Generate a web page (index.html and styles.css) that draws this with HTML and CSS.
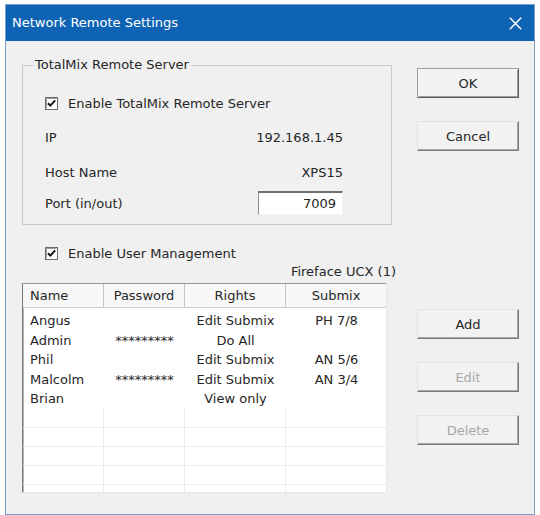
FILE: index.html
```html
<!DOCTYPE html>
<html lang="en">
<head>
<meta charset="utf-8">
<title>Network Remote Settings</title>
<link rel="stylesheet" href="styles.css">
</head>
<body>
<div class="dialog">
  <div class="titlebar">
    <span class="title">Network Remote Settings</span>
    <svg class="close" width="13" height="13" viewBox="0 0 13 13" aria-hidden="true"><path d="M0.8 0.8L12.2 12.2M12.2 0.8L0.8 12.2" stroke="#fff" stroke-width="1.5" fill="none"/></svg>
  </div>
  <div class="content">
    <fieldset class="group">
      <legend>TotalMix Remote Server</legend>
      <div class="group-body">
        <div class="check">
          <svg class="box" width="13" height="13" viewBox="0 0 13 13" aria-hidden="true"><rect x="0.5" y="0.5" width="12" height="12" fill="#fff" stroke="#6a6a6a"/><path d="M1.5 1.5H11.5M1.5 1.5V11.5" stroke="#9a9a9a"/><path d="M3 6.2L5.3 8.6L10.2 3.4" stroke="#111" stroke-width="2" fill="none"/></svg>
          <span>Enable TotalMix Remote Server</span>
        </div>
        <div class="field f-ip"><span>IP</span><span>192.168.1.45</span></div>
        <div class="field f-host"><span>Host Name</span><span>XPS15</span></div>
        <div class="field f-port"><span>Port (in/out)</span><span class="input">7009</span></div>
      </div>
    </fieldset>

    <div class="btns btns-top">
      <button class="btn default">OK</button>
      <button class="btn">Cancel</button>
    </div>

    <div class="users">
      <div class="check check-users">
        <svg class="box" width="13" height="13" viewBox="0 0 13 13" aria-hidden="true"><rect x="0.5" y="0.5" width="12" height="12" fill="#fff" stroke="#6a6a6a"/><path d="M1.5 1.5H11.5M1.5 1.5V11.5" stroke="#9a9a9a"/><path d="M3 6.2L5.3 8.6L10.2 3.4" stroke="#111" stroke-width="2" fill="none"/></svg>
        <span>Enable User Management</span>
      </div>
      <div class="device">Fireface UCX (1)</div>
      <div class="list">
        <div class="row head">
          <div class="c name">Name</div>
          <div class="c">Password</div>
          <div class="c">Rights</div>
          <div class="c">Submix</div>
        </div>
        <div class="list-body">
          <div class="row"><div class="c name">Angus</div><div class="c"></div><div class="c">Edit Submix</div><div class="c">PH 7/8</div></div>
          <div class="row"><div class="c name">Admin</div><div class="c pw">*********</div><div class="c">Do All</div><div class="c"></div></div>
          <div class="row"><div class="c name">Phil</div><div class="c"></div><div class="c">Edit Submix</div><div class="c">AN 5/6</div></div>
          <div class="row"><div class="c name">Malcolm</div><div class="c pw">*********</div><div class="c">Edit Submix</div><div class="c">AN 3/4</div></div>
          <div class="row"><div class="c name">Brian</div><div class="c"></div><div class="c">View only</div><div class="c"></div></div>
          <div class="row empty"><div class="c"></div><div class="c"></div><div class="c"></div><div class="c"></div></div>
          <div class="row empty"><div class="c"></div><div class="c"></div><div class="c"></div><div class="c"></div></div>
          <div class="row empty"><div class="c"></div><div class="c"></div><div class="c"></div><div class="c"></div></div>
          <div class="row empty"><div class="c"></div><div class="c"></div><div class="c"></div><div class="c"></div></div>
          <div class="row empty"><div class="c"></div><div class="c"></div><div class="c"></div><div class="c"></div></div>
        </div>
      </div>
    </div>

    <div class="btns btns-bottom">
      <button class="btn">Add</button>
      <button class="btn disabled">Edit</button>
      <button class="btn disabled">Delete</button>
    </div>
  </div>
</div>
</body>
</html>
```

FILE: styles.css
```css
html, body {
  margin: 0;
  padding: 0;
  background: #ffffff;
}

body {
  font-family: "DejaVu Sans", "Liberation Sans", sans-serif;
  font-size: 13px;
  color: #262626;
}

.dialog {
  box-sizing: border-box;
  width: 530px;
  height: 511px;
  margin: 4px 0 0 5px;
  border: 1px solid #7c9fc6;
  background: #f0f0f0;
  display: flex;
  flex-direction: column;
}

.titlebar {
  height: 36px;
  flex: none;
  background: #0e63b5;
  display: flex;
  align-items: center;
  justify-content: space-between;
  padding: 0 12px 0 6px;
  color: #fff;
}

.title {
  font-size: 13px;
  line-height: 16px;
}

.close {
  display: block;
}

.content {
  flex: 1;
  display: grid;
  grid-template-columns: 370px 102px;
  grid-template-rows: 168px auto;
  column-gap: 25px;
  align-items: start;
  padding: 16px 15px 0 16px;
}

.group {
  margin: 0;
  padding: 0;
  min-width: 0;
  border: 1px solid #c8c8c8;
}

.group legend {
  margin-left: 10px;
  padding: 0 2px;
  line-height: 16px;
}

.group-body {
  padding: 22px 48px 9px 22px;
}

.check {
  display: flex;
  align-items: center;
  gap: 10px;
  height: 16px;
}

.box {
  display: block;
  flex: none;
}

.field {
  display: flex;
  justify-content: space-between;
  align-items: center;
  height: 16px;
}

.f-ip { margin-top: 18px; }
.f-host { margin-top: 19px; }
.f-port { margin-top: 11px; height: 24px; }

.input {
  box-sizing: border-box;
  width: 85px;
  height: 24px;
  line-height: 21px;
  background: #fff;
  border-top: 2px solid #707070;
  border-left: 1px solid #8a8a8a;
  border-right: 1px solid #f4f4f4;
  border-bottom: 1px solid #f4f4f4;
  text-align: right;
  padding-right: 6px;
}

.btns {
  display: flex;
  flex-direction: column;
  gap: 23px;
}

.btns-top { padding-top: 11px; }
.btns-bottom { padding-top: 84px; }

.btn {
  box-sizing: border-box;
  width: 102px;
  height: 30px;
  margin: 0;
  padding: 0;
  font: inherit;
  color: #262626;
  background: #f2f2f2;
  border: 1px solid;
  border-color: #e2e2e2 #7a7a7a #7a7a7a #e2e2e2;
  box-shadow: inset -1px -1px #a8a8a8;
}

.btn.default {
  border-color: #9a9a9a #5e5e5e #5e5e5e #9a9a9a;
  box-shadow: inset 1px 1px #f8f8f8, inset -1px -1px #9c9c9c;
}

.btn.disabled {
  color: #a6a6a6;
}

.check-users {
  margin-top: 20px;
  padding-left: 23px;
}

.device {
  margin-top: 3px;
  margin-right: -4px;
  line-height: 16px;
  text-align: right;
}

.list {
  box-sizing: border-box;
  margin-top: 3px;
  width: 365px;
  height: 210px;
  background: #fff;
  border: 1px solid;
  border-color: #9a9a9a #e6e6e6 #e6e6e6 #7a7a7a;
  box-shadow: inset 1px 0 #b4b4b4;
  overflow: hidden;
}

.row {
  display: grid;
  grid-template-columns: 81px 81px 101px 101px;
  height: 19.5px;
  line-height: 19.5px;
}

.row .c {
  text-align: center;
  white-space: nowrap;
  overflow: hidden;
}

.row .c.name {
  text-align: left;
  padding-left: 7px;
}

.row.head {
  height: 23px;
  line-height: 23px;
  background: #f7f7f7;
  border-bottom: 1px solid #cfcfcf;
}

.row.head .c {
  border-right: 1px solid #c4c4c4;
}

.list-body {
  padding-top: 3px;
}

.row.empty {
  height: 19px;
}

.row.empty .c {
  border-right: 1px solid #ededed;
  border-bottom: 1px solid #ededed;
}
```
